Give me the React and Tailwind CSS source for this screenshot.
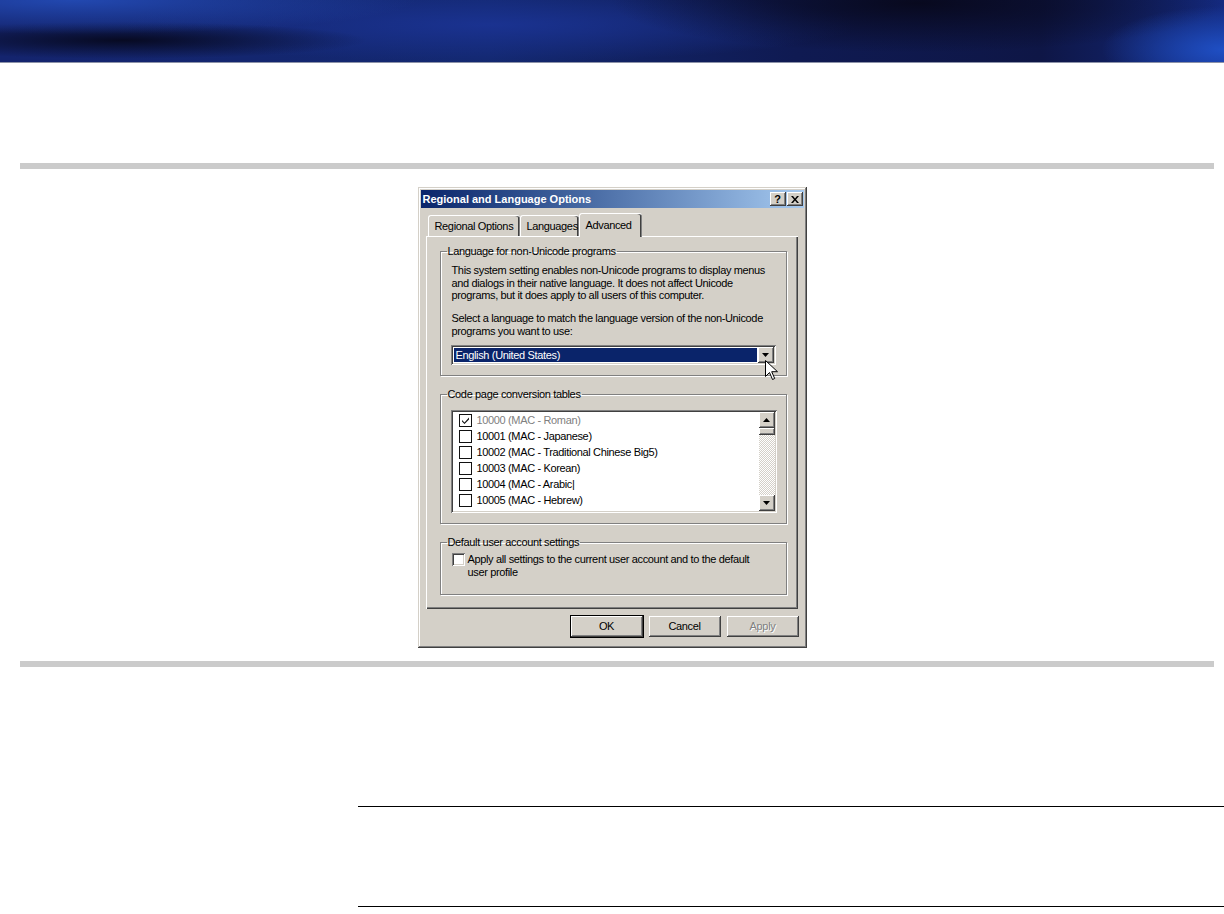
import React from 'react';

const raised =
  'shadow-[inset_-1px_-1px_0_#404040,inset_1px_1px_0_#ffffff,inset_-2px_-2px_0_#808080,inset_2px_2px_0_#d4d0c8]';
const sunken =
  'shadow-[inset_1px_1px_0_#808080,inset_-1px_-1px_0_#ffffff,inset_2px_2px_0_#404040,inset_-2px_-2px_0_#d4d0c8]';
const etched = 'border border-[#808080] shadow-[1px_1px_0_#ffffff,inset_1px_1px_0_#ffffff]';

const codePages = [
  { label: '10000 (MAC - Roman)', checked: true, disabled: true },
  { label: '10001 (MAC - Japanese)' },
  { label: '10002 (MAC - Traditional Chinese Big5)' },
  { label: '10003 (MAC - Korean)' },
  { label: '10004 (MAC - Arabic|' },
  { label: '10005 (MAC - Hebrew)' },
];

function Arrow({ up }) {
  return (
    <svg width="7" height="4" viewBox="0 0 7 4" className={up ? 'rotate-180' : ''}>
      <path d="M0 0h7L3.5 4z" fill="#000" />
    </svg>
  );
}

function GroupBox({ title, height, className = '', children }) {
  return (
    <fieldset className={`${etched} ${className} box-border w-[347px]`} style={{ height }}>
      <legend className="ml-[6px] px-[1px] leading-[13px]">{title}</legend>
      {children}
    </fieldset>
  );
}

function Button({ children, isDefault, disabled }) {
  return (
    <div
      className={`flex h-[21px] w-[72px] items-center justify-center bg-[#d4d0c8] ${raised} ${
        isDefault ? 'outline outline-1 outline-black' : ''
      } ${disabled ? 'text-[#808080] [text-shadow:1px_1px_0_#fff]' : 'text-black'}`}
    >
      {children}
    </div>
  );
}

function Tab({ children, width, selected }) {
  return (
    <div
      className={`relative flex items-center overflow-hidden whitespace-nowrap rounded-t-[3px] border-l border-t border-white bg-[#d4d0c8] pl-[6px] shadow-[inset_-1px_0_0_#808080,inset_-2px_0_0_#404040] ${
        selected ? 'z-10 top-[1px] h-[24px]' : 'h-[21px]'
      }`}
      style={{ width }}
    >
      {children}
    </div>
  );
}

function Dialog() {
  return (
    <div
      className={`mx-auto box-border h-[461px] w-[389px] bg-[#d4d0c8] p-[3px] text-[11px] leading-[13px] tracking-[-0.35px] text-black font-['Liberation_Sans',Arial,sans-serif] shadow-[inset_-1px_-1px_0_#404040,inset_1px_1px_0_#d4d0c8,inset_-2px_-2px_0_#808080,inset_2px_2px_0_#ffffff]`}
    >
      <div className="flex h-[18px] items-center justify-between bg-gradient-to-r from-[#0a246a] to-[#a6caf0] pl-[2px] pr-[1px]">
        <span className="font-bold tracking-normal text-white">Regional and Language Options</span>
        <div className="flex gap-[1px]">
          <div className={`flex h-[14px] w-[16px] items-center justify-center bg-[#d4d0c8] ${raised}`}>
            <span className="text-[11px] font-bold leading-none">?</span>
          </div>
          <div className={`flex h-[14px] w-[16px] items-center justify-center bg-[#d4d0c8] ${raised}`}>
            <svg width="8" height="7" viewBox="0 0 8 7">
              <path d="M0 0h2l2 2.5L6 0h2L5 3.5 8 7H6L4 4.5 2 7H0l3-3.5z" fill="#000" />
            </svg>
          </div>
        </div>
      </div>

      <div className="mt-[5px] ml-[7px] flex h-[23px] items-end">
        <Tab width={92}>Regional Options</Tab>
        <Tab width={59}>Languages</Tab>
        <Tab width={63} selected>
          Advanced
        </Tab>
      </div>

      <div className="ml-[5px] box-border h-[373px] w-[372px] border-l border-t border-white shadow-[inset_-1px_-1px_0_#404040,inset_-2px_-2px_0_#808080] pl-[13px] pt-[8px]">
        <GroupBox title="Language for non-Unicode programs" height={131}>
          <div className="whitespace-nowrap pl-[11px] pt-[6px] leading-[12.5px]">
            <p>This system setting enables non-Unicode programs to display menus</p>
            <p>and dialogs in their native language. It does not affect Unicode</p>
            <p>programs, but it does apply to all users of this computer.</p>
            <p className="mt-[10.5px]">Select a language to match the language version of the non-Unicode</p>
            <p>programs you want to use:</p>
            <div className={`relative mt-[8px] -ml-[1px] flex h-[20px] w-[325px] bg-white p-[2px] ${sunken}`}>
              <div className="m-[1px] flex flex-1 items-center bg-[#0a246a] pl-[2px] text-white">
                English (United States)
              </div>
              <div className={`flex h-[16px] w-[16px] items-center justify-center bg-[#d4d0c8] ${raised}`}>
                <Arrow />
              </div>
              <svg
                width="13"
                height="21"
                viewBox="0 0 13 21"
                className="absolute left-[314px] top-[15px]"
              >
                <path
                  d="M0.5 0.5v16l4-4 3 7 2.2-1-3-6.8h5.8z"
                  fill="#fff"
                  stroke="#000"
                  strokeWidth="1"
                />
              </svg>
            </div>
          </div>
        </GroupBox>

        <GroupBox title="Code page conversion tables" height={136} className="mt-[12px]">
          <div className="pl-[11px] pt-[9px]">
            <div className={`-ml-[1px] flex h-[103px] w-[326px] bg-white p-[2px] ${sunken}`}>
              <div className="flex-1 overflow-hidden whitespace-nowrap">
                {codePages.map((item) => (
                  <div key={item.label} className="flex h-[16px] items-center pl-[6px]">
                    <div className="flex h-[13px] w-[13px] items-center justify-center border-[1.5px] border-[#111] bg-white">
                      {item.checked && (
                        <svg width="7" height="7" viewBox="0 0 7 7">
                          <path d="M0 3l2.5 2.5L7 0.5v2L2.5 7 0 4.5z" fill="#111" />
                        </svg>
                      )}
                    </div>
                    <span className={`ml-[5px] ${item.disabled ? 'text-[#808080]' : 'text-black'}`}>
                      {item.label}
                    </span>
                  </div>
                ))}
              </div>
              <div className="flex w-[16px] flex-col bg-[repeating-conic-gradient(#ffffff_0_25%,#d4d0c8_0_50%)] bg-[length:2px_2px]">
                <div className={`flex h-[16px] items-center justify-center bg-[#d4d0c8] ${raised}`}>
                  <Arrow up />
                </div>
                <div className={`h-[7px] bg-[#d4d0c8] ${raised}`} />
                <div className="flex-1" />
                <div className={`flex h-[16px] items-center justify-center bg-[#d4d0c8] ${raised}`}>
                  <Arrow />
                </div>
              </div>
            </div>
          </div>
        </GroupBox>

        <GroupBox title="Default user account settings" height={59} className="mt-[12px]">
          <div className="flex items-start pl-[11px] pt-[4px]">
            <div className={`h-[13px] w-[13px] shrink-0 bg-white ${sunken}`} />
            <p className="ml-[3px] whitespace-nowrap leading-[13px]">
              Apply all settings to the current user account and to the default
              <br />
              user profile
            </p>
          </div>
        </GroupBox>
      </div>

      <div className="mt-[7px] mr-[5px] flex justify-end gap-[6px]">
        <Button isDefault>OK</Button>
        <Button>Cancel</Button>
        <Button disabled>Apply</Button>
      </div>
    </div>
  );
}

export default function App() {
  return (
    <div className="min-h-[914px] overflow-hidden bg-white">
      <div className="h-[63px] border-b border-[#8c92a8] bg-[radial-gradient(ellipse_28%_55%_at_6%_0%,#2248b0_0%,transparent_100%),radial-gradient(ellipse_10%_70%_at_100%_80%,#1f4fc4_0%,transparent_100%),radial-gradient(ellipse_25%_80%_at_75%_5%,#08091e_0%,transparent_100%),radial-gradient(ellipse_20%_30%_at_10%_65%,#070a22_0%,transparent_100%),radial-gradient(ellipse_30%_60%_at_40%_40%,#1a3290_0%,transparent_100%),linear-gradient(90deg,#14246e_0%,#132870_40%,#0f1a52_65%,#0e1646_85%,#142a80_100%)]" />
      <div className="ml-[20px] mr-[10px] mt-[100px] h-[6px] bg-[#cbcbcb]" />
      <div className="mt-[18px]">
        <Dialog />
      </div>
      <div className="ml-[20px] mr-[10px] mt-[13px] h-[6px] bg-[#cbcbcb]" />
      <div className="ml-[358px] mt-[139px] h-px bg-black" />
      <div className="ml-[358px] mt-[99px] h-px bg-black" />
    </div>
  );
}
